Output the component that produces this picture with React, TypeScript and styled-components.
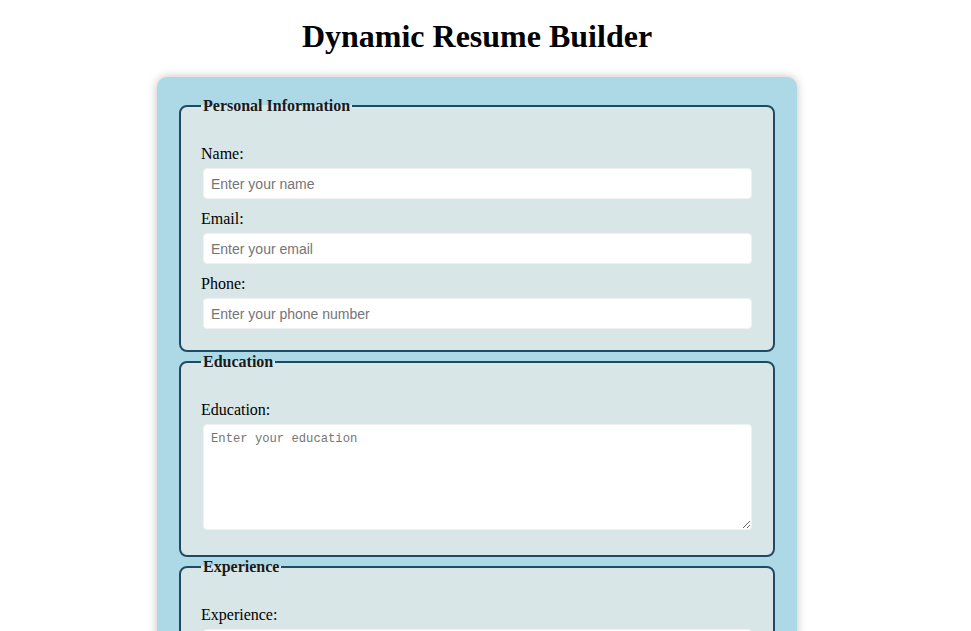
import React from "react";
import styled, { createGlobalStyle } from "styled-components";

const GlobalStyle = createGlobalStyle`
  html, body {
    margin: 0;
    padding: 0;
    background: #ffffff;
  }
  body {
    font-family: "Liberation Serif", "Times New Roman", serif;
    color: #000;
  }
`;

const Page = styled.div`
  padding-right: 17px;
`;

const Title = styled.h1`
  margin: 18px 0 22px;
  text-align: center;
  font-size: 32px;
  font-weight: bold;
`;

const Card = styled.form`
  width: 640px;
  margin: 0 auto;
  box-sizing: border-box;
  padding: 20px 22px;
  background: #add8e6;
  border-radius: 10px;
  box-shadow: 0 0 10px rgba(0, 0, 0, 0.25);
`;

const Section = styled.fieldset`
  margin: 0 0 1px;
  padding: 30px 20px 10px;
  border: 2px solid #1f4a66;
  border-radius: 8px;
  background: #d8e6e7;
`;

const Legend = styled.legend`
  padding: 0 2px;
  font-weight: bold;
  font-size: 16px;
  color: #1a1a1a;
`;

const Label = styled.label`
  display: block;
  margin-bottom: 5px;
  font-size: 16px;
`;

const Input = styled.input`
  display: block;
  width: calc(100% - 3px);
  height: 31px;
  box-sizing: border-box;
  margin: 0 0 11px 2px;
  padding: 0 7px;
  border: 1px solid #eef2f2;
  border-radius: 4px;
  background: #fff;
  font-family: "Liberation Sans", Arial, sans-serif;
  font-size: 14px;
  &::placeholder {
    color: #757575;
  }
`;

const TextArea = styled.textarea`
  width: calc(100% - 3px);
  height: 106px;
  box-sizing: border-box;
  margin: 0 0 11px 2px;
  padding: 7px;
  border: 1px solid #eef2f2;
  border-radius: 4px;
  background: #fff;
  font-family: "Liberation Mono", "Courier New", monospace;
  font-size: 12.2px;
  &::placeholder {
    color: #757575;
  }
`;

type FieldProps = {
  id: string;
  label: string;
  placeholder: string;
  multiline?: boolean;
  type?: string;
};

const Field = ({ id, label, placeholder, multiline, type = "text" }: FieldProps) => (
  <>
    <Label htmlFor={id}>{label}</Label>
    {multiline ? (
      <TextArea id={id} placeholder={placeholder} />
    ) : (
      <Input id={id} type={type} placeholder={placeholder} />
    )}
  </>
);

const App = (): JSX.Element => {
  return (
    <Page>
      <GlobalStyle />
      <Title>Dynamic Resume Builder</Title>
      <Card>
        <Section>
          <Legend>Personal Information</Legend>
          <Field id="name" label="Name:" placeholder="Enter your name" />
          <Field id="email" label="Email:" type="email" placeholder="Enter your email" />
          <Field id="phone" label="Phone:" type="tel" placeholder="Enter your phone number" />
        </Section>
        <Section>
          <Legend>Education</Legend>
          <Field id="education" label="Education:" placeholder="Enter your education" multiline />
        </Section>
        <Section>
          <Legend>Experience</Legend>
          <Field id="experience" label="Experience:" placeholder="Enter your experience" multiline />
        </Section>
        <Section>
          <Legend>Skills</Legend>
          <Field id="skills" label="Skills:" placeholder="Enter your skills" multiline />
        </Section>
      </Card>
    </Page>
  );
};

export default App;
